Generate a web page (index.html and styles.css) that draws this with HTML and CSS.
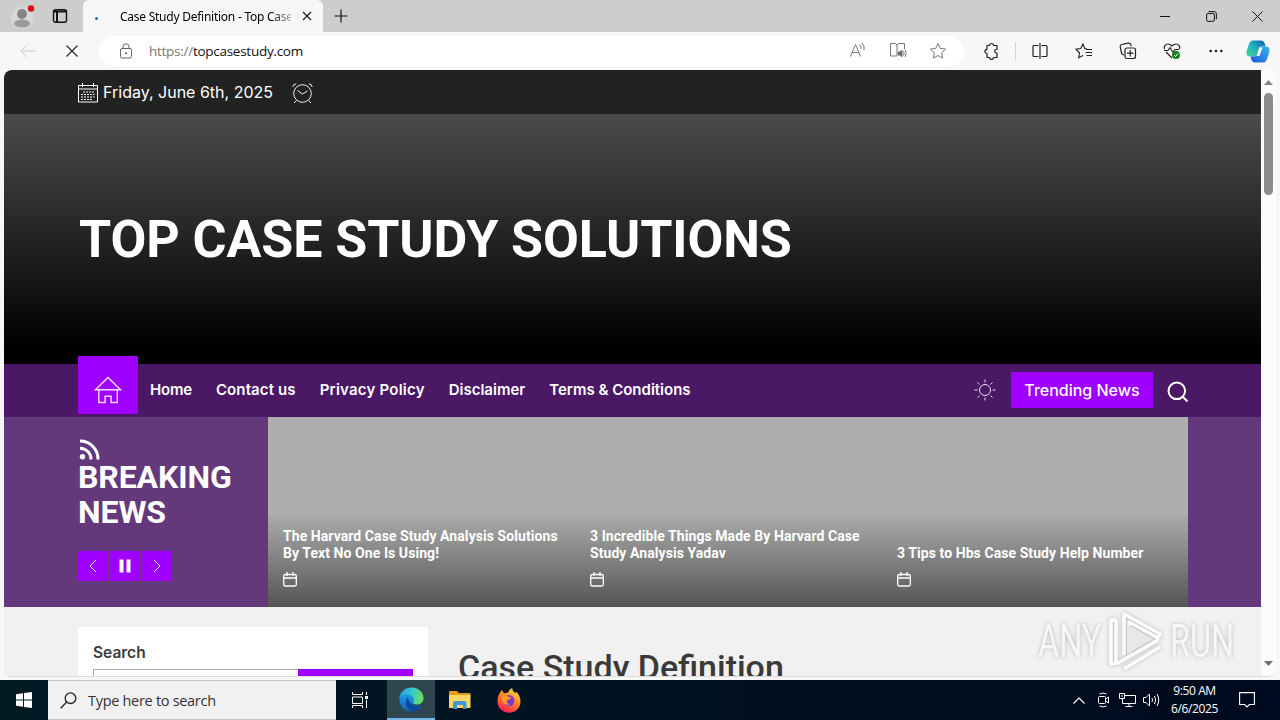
FILE: index.html
```html
<!DOCTYPE html>
<html lang="en">
<head>
    <meta charset="UTF-8">
    <meta name="viewport" content="width=device-width, initial-scale=1.0">
    <title>Case Study Definition - Top Case Study Solutions</title>
    <link rel="stylesheet" href="styles.css">
</head>
<body>
    <!-- Tab strip -->
    <header class="tab-strip">
        <div class="profile">
            <svg width="26" height="28" viewBox="0 0 26 28"><circle cx="12" cy="16" r="11" fill="#d8d8d8"/><circle cx="12" cy="12" r="5" fill="#858585"/><ellipse cx="12" cy="21.500" rx="8" ry="4" fill="#9a9a9a"/><circle cx="21" cy="6.500" r="3.200" fill="#e00b1c"/></svg>
        </div>
        <div class="workspaces">
            <svg width="16" height="16" viewBox="0 0 16 16" fill="none" stroke="#111"><rect x="1.500" y="1.700" width="13" height="12.600" rx="2" stroke-width="1.400"/><path d="M2 3.500h12M5 4v10" stroke-width="2"/></svg>
        </div>
        <div class="tab">
            <span class="tab-loader"></span>
            <span class="tab-title">Case Study Definition - Top Case</span>
            <svg class="tab-close" width="10" height="10" viewBox="0 0 10 10" stroke="#222" stroke-width="1.300"><path d="M1 1l8 8M9 1l-8 8"/></svg>
        </div>
        <svg class="new-tab" width="14" height="14" viewBox="0 0 14 14" stroke="#111" stroke-width="1.200"><path d="M7 0.500v13M0.500 7h13"/></svg>
        <div class="window-buttons">
            <span><svg width="10" height="10" viewBox="0 0 10 10"><path d="M0 5.500h10" stroke="#111"/></svg></span>
            <span><svg width="11" height="11" viewBox="0 0 11 11" fill="none" stroke="#111"><rect x=".6" y="2.500" width="7.800" height="7.800" rx="1.500"/><path d="M2.500 .6h5.500a2.400 2.400 0 0 1 2.400 2.400v5.200"/></svg></span>
            <span><svg width="11" height="11" viewBox="0 0 11 11" stroke="#111"><path d="M.5.5l10 10M10.500.5l-10 10"/></svg></span>
        </div>
    </header>

    <!-- Address bar -->
    <div class="toolbar">
        <div class="nav-button"><svg width="16" height="14" viewBox="0 0 16 14" fill="none" stroke="#c9c9c9"><path d="M7 .8L.8 7 7 13.200M1 7h15"/></svg></div>
        <div class="nav-button"><svg width="12" height="12" viewBox="0 0 12 12" stroke="#222" stroke-width="1.100"><path d="M.5.5l11 11M11.500.5l-11 11"/></svg></div>
        <div class="address">
            <svg class="lock" width="14" height="16" viewBox="0 0 14 16" fill="none" stroke="#666"><rect x="1.500" y="5.500" width="11" height="9.500" rx="1.500"/><path d="M4 5.500V3.800a3 3 0 0 1 6 0v1.700"/><circle cx="7" cy="10.200" r=".7" fill="#666"/></svg>
            <span class="url"><span class="scheme">https://</span>topcasestudy.com</span>
            <div class="address-icons">
                <span><svg width="18" height="16" viewBox="0 0 18 16" fill="none" stroke="#777"><path d="M1.500 14.500L6.500 2.500l5 12M3.200 10.500h6.600M10.500 2.500q2 1.500 1.500 4.500M12.700 1q3.500 3 2.300 7"/></svg></span>
                <span><svg width="18" height="16" viewBox="0 0 18 16" fill="none" stroke="#777"><path d="M8 14H1.500V1.500h5L8 3v11M8 3l1.500-1.500h6V7"/><path d="M9 10h2l2-2v7l-2-2H9z" fill="#666"/><path d="M14.500 9.500q1 2 0 4M16.200 8q1.800 3.500 0 7"/></svg></span>
                <span><svg width="18" height="18" viewBox="0 0 18 18" fill="none" stroke="#777"><path d="M9 1.500l2.300 4.900 5.200.7-3.800 3.700.9 5.300L9 13.500l-4.600 2.600.9-5.300L1.500 7.100l5.200-.7z" stroke-linejoin="round"/></svg></span>
            </div>
        </div>
        <div class="extensions"><svg width="16" height="18" viewBox="0 0 16 18" fill="none" stroke="#222" stroke-width="1.200"><path d="M4 3.500h2.500a2 2 0 0 1 4 0h3.500v4q-2.300-.2-2.300 1.700t2.300 1.800v4.500h-3.500a2 2 0 0 1-4 0H4v-4a2.100 2.100 0 1 1 0-4.200z" stroke-linejoin="round"/></svg></div>
        <div class="tools">
            <span><svg width="16" height="16" viewBox="0 0 16 16" fill="none" stroke="#222" stroke-width="1.200"><path d="M6.500 2.500H2a1 1 0 0 0-1 1v9a1 1 0 0 0 1 1h4.500M9.500 2.500H14a1 1 0 0 1 1 1v9a1 1 0 0 1-1 1H9.500M8 0v16"/></svg></span>
            <span><svg width="18" height="16" viewBox="0 0 18 16" fill="none" stroke="#222" stroke-width="1.100"><path d="M12 5.800L9.700 5.500 8 1 5.800 5.500 1 6.200l3.500 3.600-.8 4.900L8 12.400M11 6.500h6M10.500 9.500H17M11.500 12.500H17"/></svg></span>
            <span><svg width="18" height="18" viewBox="0 0 18 18" fill="none" stroke="#222" stroke-width="1.200"><rect x="6" y="6" width="10.500" height="10.500" rx="2"/><path d="M11.200 8v6.500M8 11.200h6.500M5 13q-2 0-2.500-2L1.200 5q-.3-2 1.500-2.500l6.500-1.300q2-.3 2.700 1.500l.3 1.500"/></svg></span>
            <span><svg width="18" height="18" viewBox="0 0 18 18" fill="none" stroke="#222" stroke-width="1.200"><path d="M1.500 7C.5 4.500 2.500 2 5 2c2 0 3 1 4 2 1-1 2-2 4-2 2.500 0 4.500 2.500 3.500 5M3 10l6 6M1 8.500h4l2-3 3 5 2-3h4"/><circle cx="13" cy="13" r="4" fill="#18831c" stroke="none"/><path d="M11 13l1.500 1.500 2.500-3" stroke="#fff" stroke-width="1"/></svg></span>
            <span><svg width="14" height="4" viewBox="0 0 14 4" fill="#222"><circle cx="1.700" cy="2" r="1.300"/><circle cx="7" cy="2" r="1.300"/><circle cx="12.300" cy="2" r="1.300"/></svg></span>
        </div>
        <svg class="copilot" width="24" height="23" viewBox="0 0 24 23">
            <defs>
                <linearGradient id="cop1" x1="0" y1="1" x2="1" y2="0"><stop offset="0" stop-color="#43d29a"/><stop offset=".5" stop-color="#1fb1bc"/><stop offset="1" stop-color="#1454b8"/></linearGradient>
                <linearGradient id="cop2" x1="0" y1="1" x2="1" y2="0"><stop offset="0" stop-color="#1c58d9"/><stop offset="1" stop-color="#38b6ef"/></linearGradient>
            </defs>
            <path d="M7 .5h8q3 0 4 4l.5 2h-4q-2 0-2.700 2.200L11 14q-.8 2.500-3 2.500H4Q-.5 16 .7 11L3 4Q4.200.5 7 .5z" fill="url(#cop1)"/>
            <path d="M17 6.500h3q4.500.5 3.300 5.500L21 19q-1.200 3.500-4 3.500H9q-3 0-4-4l-.5-2H8q2.200 0 3-2.500L13 8.500q1-2 4-2z" fill="url(#cop2)"/>
            <path d="M13.500 7.500h3l-3 8.500h-3z" fill="#f4fbff"/>
        </svg>
    </div>

    <!-- Web page -->
    <div class="window">
        <main class="page">
            <div class="topbar">
                <svg width="20" height="20" viewBox="0 0 20 20" fill="none" stroke="#fff"><path d="M.5 2.500h19v16.500H.5zM.5 6h19M4.500 0v4M15.500 0v4"/><path d="M5 9h11.500M3 11.500h13.500M3 14h13.500M3 16.500h11" stroke-dasharray="2 1"/></svg>
                <span class="date">Friday, June 6th, 2025</span>
                <svg class="clock" width="21" height="21" viewBox="0 0 21 21" fill="none" stroke="#eee"><circle cx="10.500" cy="10.500" r="8.800"/><path d="M5.500 7.500l5 3.500 5-3M.8 4Q1 1 4.200.9M16.800.9q3.200.1 3.400 3.100M4.500 17.500L2 20M16.500 17.500L19 20"/></svg>
            </div>

            <section class="hero">
                <h1>TOP CASE STUDY SOLUTIONS</h1>
            </section>

            <nav class="menu">
                <a class="home-tile">
                    <svg width="28" height="28" viewBox="0 0 28 28" fill="none" stroke="#f6ddff" stroke-width="1.400"><path d="M1.500 13.800L14 1.500l12.500 12.300zM4.800 14v12.500h6.300v-6.300h6v6.300h6.200V14"/></svg>
                </a>
                <ul>
                    <li class="m-home">Home</li>
                    <li class="m-contact">Contact us</li>
                    <li class="m-privacy">Privacy Policy</li>
                    <li>Disclaimer</li>
                    <li>Terms &amp; Conditions</li>
                </ul>
                <svg class="sun" width="22" height="22" viewBox="0 0 22 22" fill="none" stroke="#ecdff2"><circle cx="11" cy="11" r="5.500"/><path d="M11 .5v3M11 18.500v3M.5 11h3M18.500 11h3M3.500 3.500l2 2M16.500 16.500l2 2M3.500 18.500l2-2M16.500 5.500l2-2"/></svg>
                <a class="trending">Trending News</a>
                <svg class="search-icon" width="22" height="22" viewBox="0 0 22 22" fill="none" stroke="#fff" stroke-width="2"><circle cx="9.800" cy="9.800" r="8.300"/><path d="M15.800 15.800l4.700 4.700"/></svg>
            </nav>

            <section class="breaking">
                <div class="breaking-head">
                    <svg class="rss" width="22" height="21" viewBox="0 0 22 21" fill="none" stroke="#fff" stroke-width="3"><path d="M1 2a18 18 0 0 1 18 18.500M1 9.200A11 11 0 0 1 12 20.500"/><circle cx="3.500" cy="17.800" r="2.700" fill="#fff" stroke="none"/></svg>
                    <h2>BREAKING<br>NEWS</h2>
                    <div class="slider-buttons">
                        <span><svg width="8" height="14" viewBox="0 0 8 14" fill="none" stroke="#fff"><path d="M7 1L1 7l6 6"/></svg></span>
                        <span><svg width="12" height="14" viewBox="0 0 12 14" fill="#fff"><path d="M.5.5h4v13h-4zM7.500.5h4v13h-4z"/></svg></span>
                        <span><svg width="8" height="14" viewBox="0 0 8 14" fill="none" stroke="#fff"><path d="M1 1l6 6-6 6"/></svg></span>
                    </div>
                </div>
                <div class="slides">
                    <article>
                        <h3>The Harvard Case Study Analysis Solutions<br>By Text No One Is Using!</h3>
                        <svg width="14" height="15" viewBox="0 0 14 15" fill="none" stroke="#fff" stroke-width="1.300"><rect x=".7" y="2.500" width="12.600" height="11.500" rx="1.500"/><path d="M.7 6h12.600M4 0v4M10 0v4"/></svg>
                    </article>
                    <article>
                        <h3>3 Incredible Things Made By Harvard Case<br>Study Analysis Yadav</h3>
                        <svg width="14" height="15" viewBox="0 0 14 15" fill="none" stroke="#fff" stroke-width="1.300"><rect x=".7" y="2.500" width="12.600" height="11.500" rx="1.500"/><path d="M.7 6h12.600M4 0v4M10 0v4"/></svg>
                    </article>
                    <article>
                        <h3>3 Tips to Hbs Case Study Help Number</h3>
                        <svg width="14" height="15" viewBox="0 0 14 15" fill="none" stroke="#fff" stroke-width="1.300"><rect x=".7" y="2.500" width="12.600" height="11.500" rx="1.500"/><path d="M.7 6h12.600M4 0v4M10 0v4"/></svg>
                    </article>
                </div>
            </section>

            <section class="content">
                <aside class="widget">
                    <label>Search</label>
                    <div class="search-form">
                        <input type="text">
                        <button></button>
                    </div>
                </aside>
                <h2 class="post-title">Case Study Definition</h2>
            </section>

            <div class="watermark">
                <span>ANY</span>
                <svg width="58" height="64" viewBox="0 0 58 64" fill="none" stroke="#fff" stroke-width="3.500" stroke-linejoin="round"><path d="M9 11H4v44l5-1V11"/><path d="M17 46V5l36 20-2 4-29-16v31M9 55l42-24M17 60l36-22"/><path d="M20 15v30l26-15z" fill="#e6e6e6" stroke="none"/></svg>
                <span>RUN</span>
            </div>
        </main>
        <div class="scrollbar">
            <svg width="9" height="5" viewBox="0 0 9 5"><path d="M0 5l4.500-5L9 5z" fill="#858585"/></svg>
            <div class="thumb"></div>
            <svg width="9" height="5" viewBox="0 0 9 5"><path d="M0 0l4.500 5L9 0z" fill="#707070"/></svg>
        </div>
    </div>

    <!-- Taskbar -->
    <footer class="taskbar">
        <div class="start"><svg width="16" height="16" viewBox="0 0 16 16" fill="#fff"><path d="M0 2.200l7-1v6.300H0zM8 1l8-1v7.500H8zM0 8.500h7v6.300l-7-1zM8 8.500h8V16l-8-1z"/></svg></div>
        <div class="task-search">
            <svg width="17" height="17" viewBox="0 0 17 17" fill="none" stroke="#222" stroke-width="1.300"><circle cx="10.500" cy="6.200" r="5.300"/><path d="M6.700 10L.7 16.200"/></svg>
            <span>Type here to search</span>
        </div>
        <div class="task-view"><svg width="17" height="16" viewBox="0 0 17 16" fill="none" stroke="#fff"><path d="M.5 0v2.500h10V0M.5 5h10v6.500H.5zM.5 16v-2.500h10V16M14.500 0v3M14.500 8v8"/><path d="M13 4h3v3h-3z" fill="#fff" stroke="none"/></svg></div>
        <div class="app active">
            <svg width="25" height="25" viewBox="0 0 25 25">
                <defs>
                    <linearGradient id="edge1" x1="0" y1=".3" x2="1" y2=".5"><stop offset="0" stop-color="#249fdc"/><stop offset=".5" stop-color="#36c8cb"/><stop offset="1" stop-color="#6be05a"/></linearGradient>
                    <linearGradient id="edge2" x1="0" y1="0" x2="0" y2="1"><stop offset="0" stop-color="#1b9de2"/><stop offset="1" stop-color="#1061bd"/></linearGradient>
                </defs>
                <path d="M.5 12C.5 5 6 .5 12.500.5c7 0 12 5 12 10.500 0 4-3 6.500-6.500 6.500-3 0-4.500-1.300-4-2.500 2-3-.5-6.500-4-6.500C5.500 8.500 2 10 .5 12z" fill="url(#edge1)"/>
                <path d="M.5 12.500C1.500 8.500 6 6.500 10 7.500c4 1 5 4.500 4 7.500-1 2 .8 4 4.500 4 2 0 3.500-.6 4.500-1.200C20.500 22.500 17 24.500 12.500 24.500 5.500 24.500.5 19 .5 12.500z" fill="url(#edge2)"/>
                <path d="M9 10c-4 4-2.500 11.500 3.500 14.500 5 0 8-2.500 10.500-6.700-3 2-13 2.700-14-7.800z" fill="#0d4a9c"/>
            </svg>
        </div>
        <div class="app">
            <svg width="22" height="20" viewBox="0 0 22 20"><path d="M0 2q0-1 1-1h7l2 2h10.500q1 0 1 1v3H0z" fill="#e39a18"/><path d="M0 5h21.500v13H0z" fill="#fbd768"/><path d="M4 19v-6q0-2 2-2h9.500q2 0 2 2v6H14v-4H8v4z" fill="#3e9bd3"/></svg>
        </div>
        <div class="app">
            <svg width="24" height="25" viewBox="0 0 24 25">
                <defs><linearGradient id="fox" x1=".8" y1="0" x2=".3" y2="1"><stop offset="0" stop-color="#ffe14a"/><stop offset=".45" stop-color="#ff8a22"/><stop offset="1" stop-color="#f7195c"/></linearGradient></defs>
                <path d="M5 2l2 3.500q2-1 4-.7Q12 1.500 15 0q.5 3 3 5l1.500-1Q23.500 8 23.500 13.500A11.500 11.300 0 0 1 .5 13.500Q.5 6.500 5 2z" fill="url(#fox)"/>
                <circle cx="12" cy="12.500" r="5.500" fill="#7c3bce"/><path d="M4.500 8q4-2 7 1l3 .5q-1 2-4 2.500-2 3 2 4.500-5 1-7-3z" fill="#ff962b"/>
            </svg>
        </div>
        <div class="tray">
            <svg class="chevron" width="12" height="7" viewBox="0 0 12 7" fill="none" stroke="#fff" stroke-width="1.200"><path d="M.5 6.500L6 1l5.500 5.500"/></svg>
            <svg class="meet" width="13" height="16" viewBox="0 0 13 16" fill="none" stroke="#fff"><rect x="1.500" y="4.500" width="7" height="7" rx="1"/><path d="M8.500 7.500L11.500 5v6L8.500 9M2.500 2Q6 0 9.500 2M2.500 14q3.500 2 7 0"/></svg>
            <svg class="net" width="17" height="14" viewBox="0 0 17 14" fill="none" stroke="#fff"><path d="M6 2.500h10.500v8H3.500V6M10 10.500v3M6.500 13.500h7M.5.5h5v5h-5zM2 3h2"/></svg>
            <svg class="volume" width="17" height="14" viewBox="0 0 17 14" fill="none" stroke="#fff"><path d="M.5 4.500H3l3.500-3.500v12L3 9.500H.5zM9 5q1 2 0 4M11.500 3q2.200 4 0 8M14 1q3.500 6 0 12"/></svg>
            <div class="datetime">9:50 AM<br>6/6/2025</div>
            <svg class="notice" width="16" height="16" viewBox="0 0 16 16" fill="none" stroke="#fff" stroke-width="1.100"><path d="M.6.6h14.800v11.900h-5L8 15l-2.500-2.500H.6z"/></svg>
        </div>
    </footer>
</body>
</html>
```
FILE: styles.css
```css
* {
    box-sizing: border-box;
}
body {
    margin: 0;
    width: 1280px;
    height: 720px;
    overflow: hidden;
    display: flex;
    flex-direction: column;
    background-color: #f7f7f7;
    font-family: "Open Sans", "Noto Sans", sans-serif;
}
h1, h2, h3, ul {
    margin: 0;
    padding: 0;
}
svg {
    display: block;
    flex: none;
}

/* Browser chrome */
.tab-strip {
    height: 32px;
    flex: none;
    display: flex;
    align-items: center;
    background-color: #cdcdcd;
}
.profile {
    width: 42px;
    padding-left: 10px;
}
.workspaces {
    width: 41px;
    padding-left: 10px;
}
.tab {
    width: 240px;
    height: 32px;
    padding: 0 11px;
    display: flex;
    align-items: center;
    background-color: #f7f7f7;
    border-radius: 6px 6px 0 0;
}
.tab-loader {
    width: 3px;
    height: 3px;
    margin: 4px 22px 0 1px;
    border-radius: 50%;
    background-color: #2b6ea3;
}
.tab-title {
    width: 171px;
    white-space: nowrap;
    font-family: "Noto Sans", sans-serif;
    font-size: 12px;
    letter-spacing: -0.25px;
    -webkit-mask-image: linear-gradient(to right, #000 150px, rgba(0, 0, 0, 0.3) 171px);
}
.tab-close {
    margin-left: 11px;
}
.new-tab {
    margin-left: 11px;
}
.window-buttons {
    display: flex;
    margin-left: auto;
}
.window-buttons span {
    width: 46px;
    display: flex;
    justify-content: center;
}
.toolbar {
    height: 38px;
    flex: none;
    display: flex;
    align-items: center;
    padding-left: 6px;
}
.nav-button {
    width: 44px;
    display: flex;
    justify-content: center;
}
.nav-button + .nav-button {
    margin-right: 5px;
}
.address {
    width: 865px;
    height: 30px;
    padding-left: 20px;
    display: flex;
    align-items: center;
    background-color: #fff;
    border-radius: 15px;
}
.url {
    margin-left: 16px;
    font-size: 13.5px;
    letter-spacing: -0.27px;
    color: #111;
}
.scheme {
    color: #777;
}
.address-icons {
    display: flex;
    margin-left: auto;
    margin-right: 6px;
}
.address-icons span {
    width: 40px;
    display: flex;
    justify-content: center;
}
.extensions {
    width: 52px;
    padding-left: 19px;
    border-right: 1px solid #d5d5d5;
}
.tools {
    display: flex;
    align-items: center;
    margin-left: 2px;
}
.tools span {
    width: 44px;
    display: flex;
    justify-content: center;
}
.copilot {
    margin-left: 8px;
}

/* Page viewport */
.window {
    height: 607px;
    flex: none;
    margin: 0 4px 3px;
    display: flex;
    overflow: hidden;
    border-radius: 8px;
    border-bottom: 1px solid #d8d8d8;
    background-color: #fcfcfc;
}
.page {
    position: relative;
    width: 1257px;
    overflow: hidden;
    background-color: #f1f1f1;
    font-family: Inter, sans-serif;
}
.topbar {
    height: 44px;
    padding: 2px 74px 0;
    display: flex;
    align-items: center;
    background-color: #222;
    color: #fff;
}
.date {
    margin: -2px 0 0 5px;
    width: 189px;
    font-size: 16px;
    white-space: nowrap;
}
.hero {
    height: 250px;
    padding: 2px 0 0 75px;
    display: flex;
    align-items: center;
    background-image: linear-gradient(#4b4b4b, #000 94%);
}
.hero h1 {
    font-family: Roboto, sans-serif;
    font-size: 52px;
    font-weight: 700;
    line-height: 60px;
    letter-spacing: -0.08px;
    color: #fff;
}
.menu {
    height: 53px;
    padding: 0 72px 2px 74px;
    display: flex;
    align-items: center;
    background-color: #4a1864;
    color: #fff;
}
.home-tile {
    width: 60px;
    height: 58px;
    margin-top: -9px;
    padding: 20px 16px 0;
    background-color: #a000ff;
}
.menu ul {
    display: flex;
    gap: 24px;
    margin-left: 12px;
    list-style: none;
    font-size: 15px;
    font-weight: 600;
}
.menu li {
    white-space: nowrap;
}
.menu .m-home {
    letter-spacing: -0.2px;
}
.menu .m-contact {
    letter-spacing: 0.12px;
}
.menu .m-privacy {
    letter-spacing: 0.22px;
}
.sun {
    margin-left: auto;
}
.trending {
    width: 142px;
    height: 36px;
    margin: 0 14px 0 15px;
    line-height: 36px;
    text-align: center;
    background-color: #a000ff;
    font-size: 16px;
    font-weight: 500;
}
.search-icon {
    margin-top: 5px;
}
.breaking {
    height: 190px;
    padding-left: 74px;
    display: flex;
    background-color: #63397b;
}
.breaking-head {
    width: 190px;
    padding-top: 22px;
    color: #fff;
}
.rss {
    margin-left: 1px;
}
.breaking-head h2 {
    font-family: Roboto, sans-serif;
    font-size: 32px;
    line-height: 35px;
    font-weight: 700;
    letter-spacing: -0.1px;
}
.slider-buttons {
    display: flex;
    gap: 2px;
    margin-top: 21px;
}
.slider-buttons span {
    width: 30px;
    height: 30px;
    display: flex;
    align-items: center;
    justify-content: center;
    background-color: #a000ff;
}
.slides {
    width: 920px;
    display: flex;
    background-image: linear-gradient(#adadad 50%, #555);
}
.slides article {
    width: 307px;
    flex: none;
    padding: 0 0 20px 15px;
    display: flex;
    flex-direction: column;
    justify-content: flex-end;
    gap: 10px;
}
.slides h3 {
    font-family: Roboto, sans-serif;
    font-size: 14px;
    line-height: 17px;
    font-weight: 700;
    white-space: nowrap;
    letter-spacing: 0.07px;
    color: #fff;
}
.content {
    display: flex;
    padding: 20px 74px 0;
    gap: 30px;
    color: #3a3a3a;
}
.widget {
    width: 350px;
    height: 200px;
    padding: 15px;
    background-color: #fff;
}
.widget label {
    display: block;
    font-size: 15.5px;
    font-weight: 600;
    line-height: 21px;
    margin-bottom: 6px;
}
.search-form {
    display: flex;
}
.search-form input {
    width: 205px;
    height: 45px;
    border: 1px solid #aaa;
    border-right: none;
}
.search-form button {
    width: 115px;
    border: none;
    background-color: #a000ff;
}
.post-title {
    padding-top: 20px;
    font-family: Roboto, sans-serif;
    font-size: 34px;
    line-height: 40px;
    font-weight: 500;
    white-space: nowrap;
}
.watermark {
    position: absolute;
    left: 1034px;
    top: 539px;
    display: flex;
    align-items: center;
    gap: 5px;
    color: #f8f8f8;
    font-family: Roboto, sans-serif;
    font-size: 47px;
    line-height: 64px;
    opacity: 0.8;
    filter: drop-shadow(0 0 2px #aaa);
}
.watermark span {
    width: 64px;
    transform: scaleX(0.69);
    transform-origin: left;
}
.scrollbar {
    width: 15px;
    padding: 10px 0 10px;
    display: flex;
    flex-direction: column;
    align-items: center;
}
.thumb {
    width: 9px;
    height: 102px;
    margin: 8px 0 auto;
    border-radius: 5px;
    background-color: #8b8b8b;
}

/* Windows taskbar */
.taskbar {
    height: 40px;
    flex: none;
    display: flex;
    background-image: linear-gradient(to right, #001a24, #00101f 60%, #000a1e);
    color: #fff;
}
.start, .task-view, .app {
    display: flex;
    align-items: center;
    justify-content: center;
}
.start {
    width: 48px;
}
.task-search {
    width: 288px;
    padding-left: 12px;
    display: flex;
    align-items: center;
    gap: 11px;
    border: solid #c4c4c4;
    border-width: 1px 0;
    background-color: #f1f1f1;
    color: #333;
    font-size: 14.5px;
    letter-spacing: -0.3px;
}
.task-view {
    width: 51px;
    padding-right: 2px;
}
.app {
    width: 49px;
}
.app.active {
    width: 48px;
    border-bottom: 2px solid #76b9ed;
    background-color: #30464e;
}
.tray {
    display: flex;
    align-items: center;
    margin-left: auto;
    padding-right: 25px;
}
.meet {
    margin-left: 12px;
}
.net {
    margin-left: 9px;
}
.volume {
    margin-left: 7px;
}
.datetime {
    width: 69px;
    font-size: 12px;
    line-height: 18px;
    text-align: center;
    letter-spacing: -0.4px;
}
.notice {
    margin-left: 10px;
}
```
